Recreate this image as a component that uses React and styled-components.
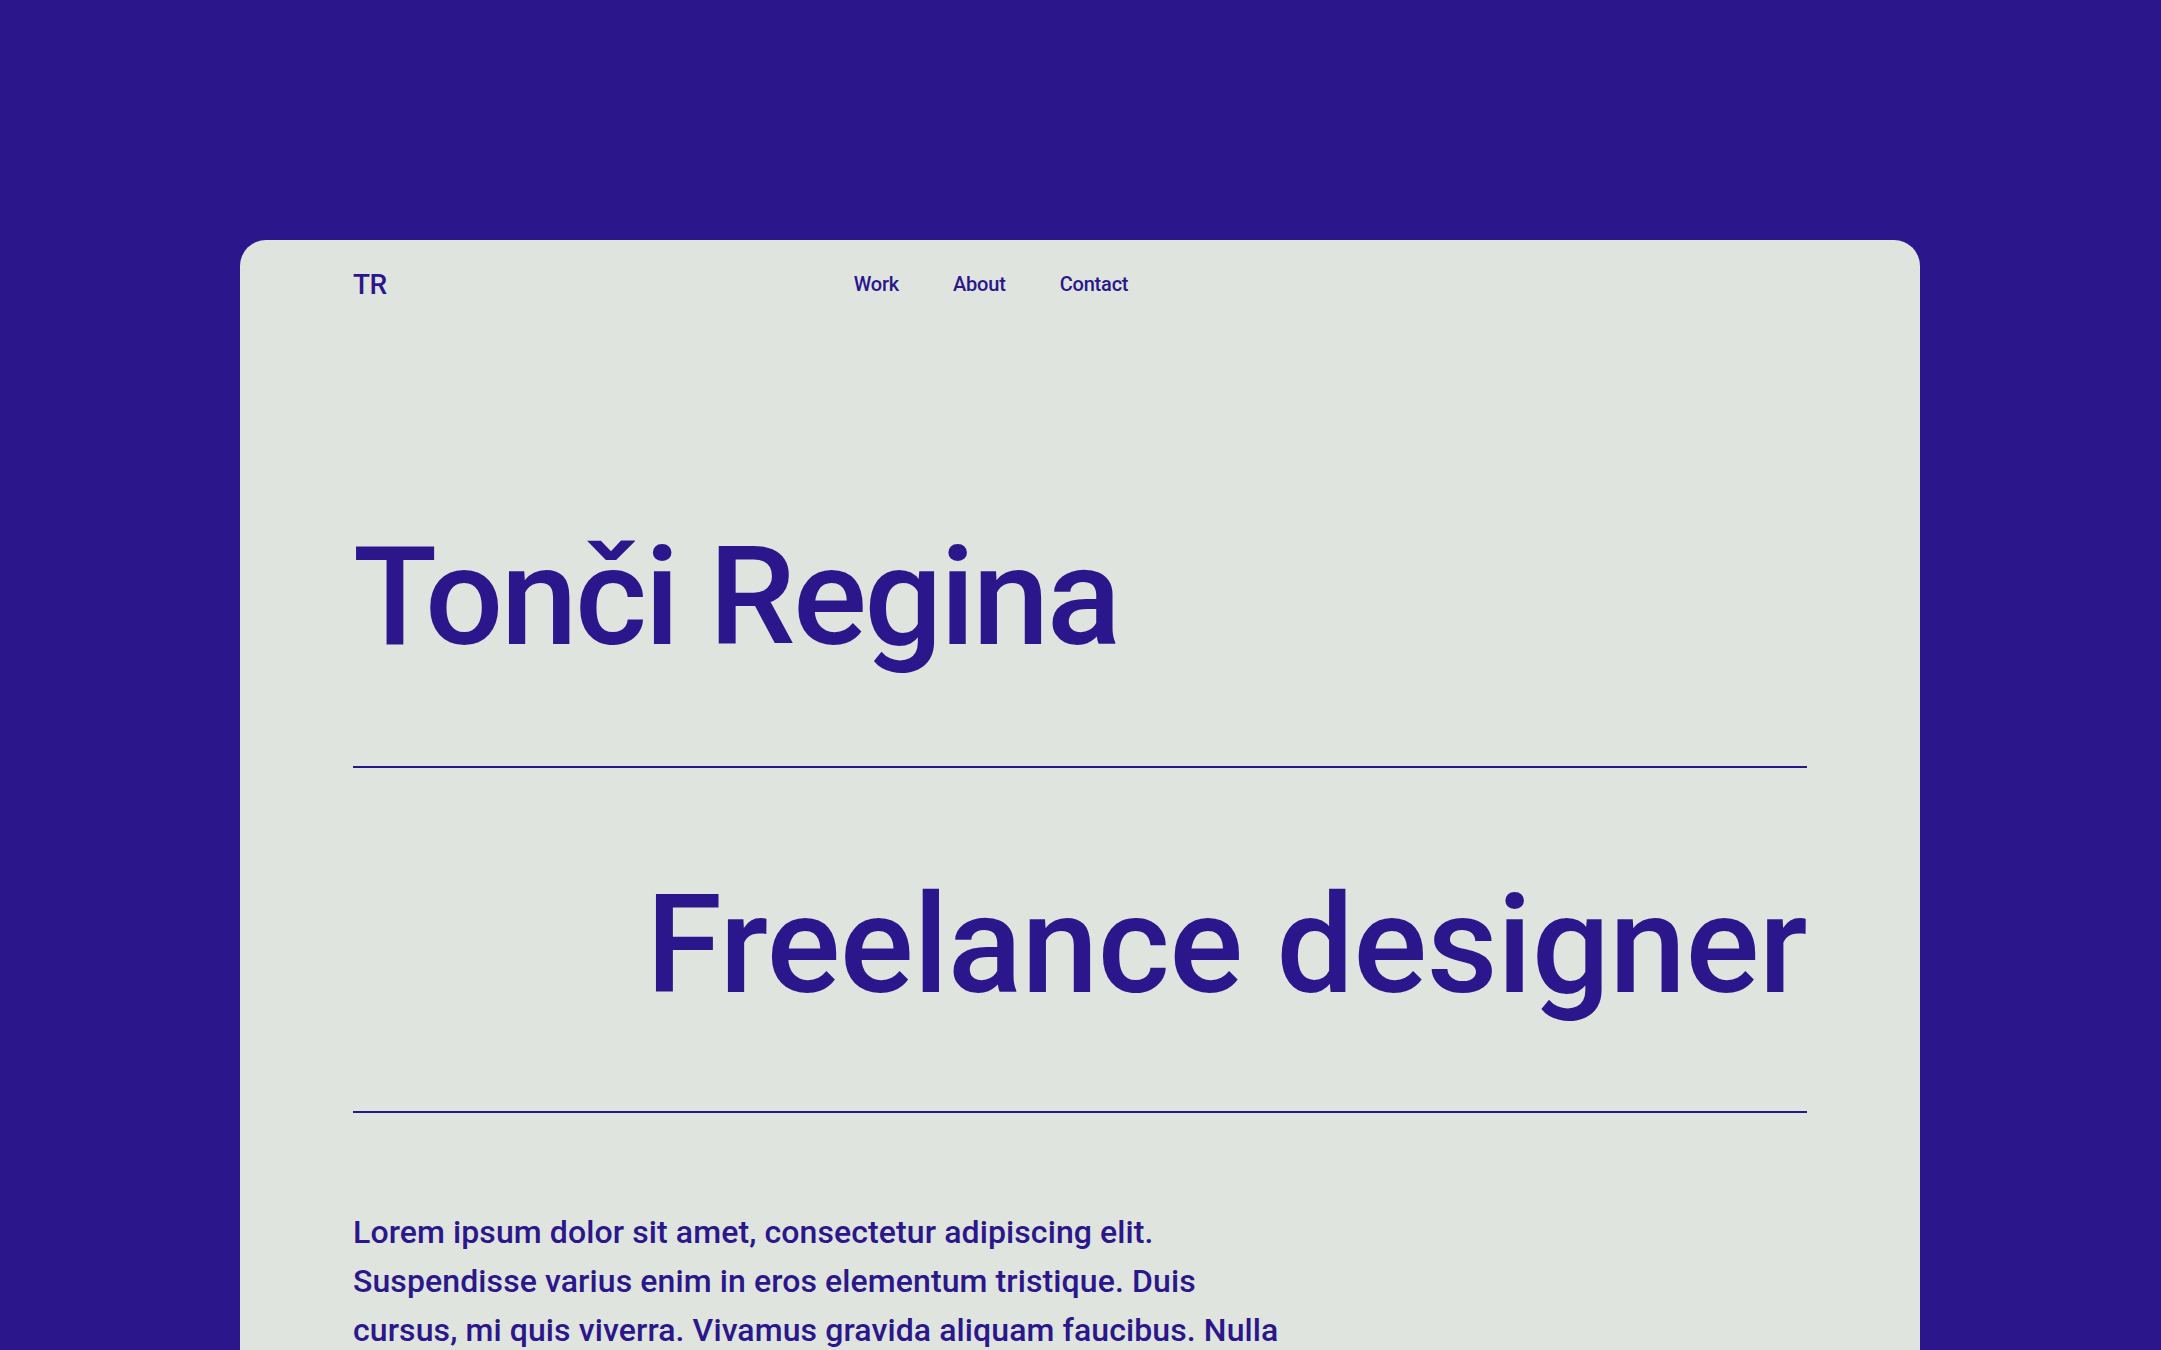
import React from "react";
import styled, { createGlobalStyle } from "styled-components";

const ink = "#2b178b";
const paper = "#dfe4df";

const GlobalStyle = createGlobalStyle`
  html, body {
    margin: 0;
    padding: 0;
    background: ${ink};
    font-family: Roboto, "Liberation Sans", Arial, sans-serif;
    color: ${ink};
  }
`;

const Page = styled.div`
  padding: 240px 241px 0 240px;
  height: 1350px;
  box-sizing: border-box;
  overflow: hidden;
`;

const Card = styled.main`
  background: ${paper};
  border-radius: 26px 26px 0 0;
  padding: 0 113px 200px 113px;
  min-height: 1300px;
`;

const Header = styled.header`
  display: grid;
  grid-template-columns: 1fr 1fr 1fr;
  column-gap: 48px;
  align-items: center;
  height: 88px;
`;

const Logo = styled.a`
  font-size: 28px;
  font-weight: 500;
  letter-spacing: -0.5px;
  color: ${ink};
  text-decoration: none;
`;

const Nav = styled.nav`
  display: flex;
  gap: 54px;
`;

const NavLink = styled.a`
  font-size: 20px;
  font-weight: 500;
  letter-spacing: -0.2px;
  color: ${ink};
  text-decoration: none;
`;

const Hero = styled.section`
  padding: ${(p) => p.$top}px 0 ${(p) => p.$bottom}px;
  border-bottom: 2px solid ${ink};
`;

const Display = styled.h1`
  margin: 0;
  font-size: 138px;
  line-height: 1;
  font-weight: 500;
  letter-spacing: ${(p) => p.$tracking}px;
  text-align: ${(p) => (p.$right ? "right" : "left")};
  white-space: nowrap;
`;

const Intro = styled.p`
  margin: 95px 0 0;
  max-width: 945px;
  font-size: 32px;
  line-height: 49px;
  font-weight: 500;
  letter-spacing: 0.1px;
`;

const App = () => {
  return (
    <>
      <GlobalStyle />
      <Page>
        <Card>
          <Header>
            <Logo href="#">TR</Logo>
            <Nav>
              <NavLink href="#">Work</NavLink>
              <NavLink href="#">About</NavLink>
              <NavLink href="#">Contact</NavLink>
            </Nav>
          </Header>
          <Hero $top={200} $bottom={100}>
            <Display $tracking={-2.6}>Tonči Regina</Display>
          </Hero>
          <Hero $top={108} $bottom={97}>
            <Display $right $tracking={-0.6}>Freelance designer</Display>
          </Hero>
          <Intro>
            Lorem ipsum dolor sit amet, consectetur adipiscing elit.
            Suspendisse varius enim in eros elementum tristique. Duis cursus,
            mi quis viverra. Vivamus gravida aliquam faucibus. Nulla
          </Intro>
        </Card>
      </Page>
    </>
  );
};

export default App;
